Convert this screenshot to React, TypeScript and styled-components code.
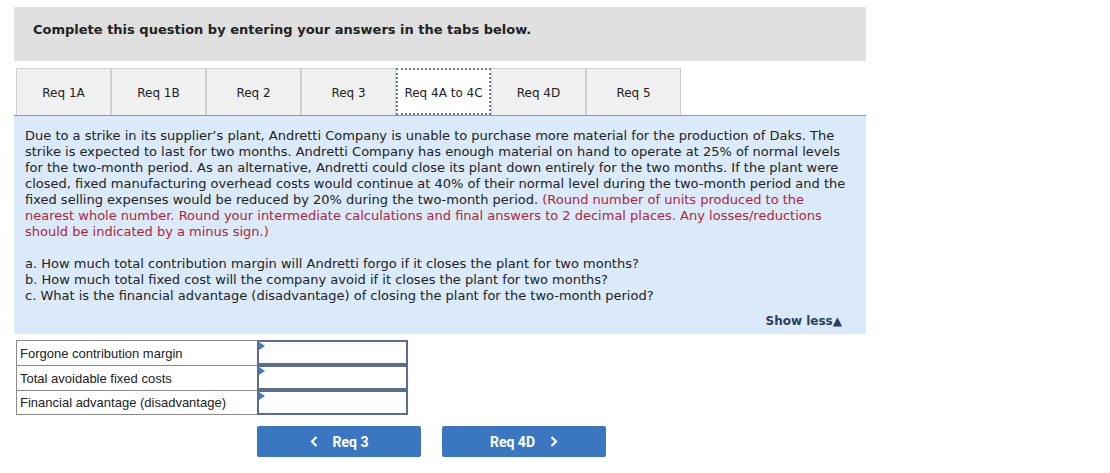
import React from "react";
import styled, { createGlobalStyle } from "styled-components";

const Global = createGlobalStyle`
  html, body { margin: 0; padding: 0; background: #fff; }
  body { font-family: "DejaVu Sans", Verdana, sans-serif; }
  * { box-sizing: border-box; }
`;

const Page = styled.div`
  padding: 7px 0 0 14px;
  width: 1110px;
`;

const Header = styled.div`
  width: 852px;
  height: 54px;
  background: #e0e0e0;
  display: flex;
  align-items: center;
  padding: 0 0 10px 19px;
  font-size: 13px;
  font-weight: bold;
  color: #222;
`;

const Tabs = styled.div`
  display: flex;
  margin-top: 7px;
  padding-left: 2px;
  width: 852px;
  border-bottom: 1px solid #999;
`;

const Tab = styled.div<{ $active?: boolean }>`
  width: 95px;
  height: 47px;
  display: flex;
  align-items: center;
  justify-content: center;
  padding-top: 2px;
  font-size: 12px;
  color: #222;
  background: ${(p) => (p.$active ? "#fff" : "#f0f0f0")};
  border: ${(p) => (p.$active ? "2px dotted #6a7a90" : "1px solid #cfcfcf")};
  border-bottom: ${(p) => (p.$active ? "2px dotted #6a7a90" : "none")};
  margin-bottom: ${(p) => (p.$active ? "-1px" : "0")};
  position: relative;
  z-index: ${(p) => (p.$active ? 1 : 0)};
`;

const Panel = styled.div`
  width: 852px;
  background: #dbeaf8;
  padding: 12px 10px 5px 11px;
  font-size: 13px;
  line-height: 16px;
  color: #222;
`;

const Para = styled.p`
  margin: 0 0 16px 0;
`;

const Red = styled.span`
  color: #b0243a;
`;

const Questions = styled.div`
  margin-bottom: 9px;
`;

const ShowLess = styled.div`
  text-align: right;
  font-size: 12px;
  font-weight: bold;
  color: #2a3f5f;
  padding-right: 14px;
`;

const Table = styled.div`
  margin-top: 6px;
  margin-left: 2px;
  display: grid;
  grid-template-columns: 241px 151px;
  width: 392px;
`;

const Label = styled.div<{ $last?: boolean }>`
  height: 25px;
  border: 1px solid #8a8a8a;
  border-right: none;
  border-bottom: ${(p) => (p.$last ? "1px solid #8a8a8a" : "none")};
  font-family: "Liberation Sans", Arial, sans-serif;
  font-size: 13px;
  color: #222;
  display: flex;
  align-items: center;
  padding-left: 3px;
`;

const InputCell = styled.div`
  height: 25px;
  position: relative;
  border: 2px solid #5b6f8c;
  background: #fff;
  &::before {
    content: "";
    position: absolute;
    left: 0;
    top: 0;
    width: 0;
    height: 0;
    border-top: 4px solid transparent;
    border-bottom: 4px solid transparent;
    border-left: 6px solid #3b7bc8;
  }
`;

const Nav = styled.div`
  display: flex;
  gap: 21px;
  margin-top: 11px;
  margin-left: 243px;
`;

const NavButton = styled.button`
  width: 164px;
  height: 31px;
  background: #3b76c1;
  border: none;
  border-radius: 2px;
  color: #fff;
  font-family: Roboto, "Liberation Sans", Arial, sans-serif;
  font-weight: bold;
  font-size: 14px;
  display: flex;
  align-items: center;
  justify-content: center;
  gap: 15px;
  padding: 0;
`;

const Chevron = ({ dir }: { dir: "left" | "right" }) => (
  <svg width="8" height="11" viewBox="0 0 8 11">
    <path
      d={dir === "left" ? "M6.5 1 L2 5.5 L6.5 10" : "M1.5 1 L6 5.5 L1.5 10"}
      stroke="#fff"
      strokeWidth="2.2"
      fill="none"
    />
  </svg>
);

const tabs = ["Req 1A", "Req 1B", "Req 2", "Req 3", "Req 4A to 4C", "Req 4D", "Req 5"];

export default function App() {
  return (
    <Page>
      <Global />
      <Header>Complete this question by entering your answers in the tabs below.</Header>
      <Tabs>
        {tabs.map((t) => (
          <Tab key={t} $active={t === "Req 4A to 4C"}>
            {t}
          </Tab>
        ))}
      </Tabs>
      <Panel>
        <Para>
          Due to a strike in its supplier’s plant, Andretti Company is unable to purchase more
          material for the production of Daks. The strike is expected to last for two months.
          Andretti Company has enough material on hand to operate at 25% of normal levels for the
          two-month period. As an alternative, Andretti could close its plant down entirely for the
          two months. If the plant were closed, fixed manufacturing overhead costs would continue at
          40% of their normal level during the two-month period and the fixed selling expenses would
          be reduced by 20% during the two-month period.{" "}
          <Red>
            (Round number of units produced to the nearest whole number. Round your intermediate
            calculations and final answers to 2 decimal places. Any losses/reductions should be
            indicated by a minus sign.)
          </Red>
        </Para>
        <Questions>
          a. How much total contribution margin will Andretti forgo if it closes the plant for two
          months?
          <br />
          b. How much total fixed cost will the company avoid if it closes the plant for two months?
          <br />
          c. What is the financial advantage (disadvantage) of closing the plant for the two-month
          period?
        </Questions>
        <ShowLess>Show less▲</ShowLess>
      </Panel>
      <Table>
        <Label>Forgone contribution margin</Label>
        <InputCell />
        <Label>Total avoidable fixed costs</Label>
        <InputCell />
        <Label $last>Financial advantage (disadvantage)</Label>
        <InputCell />
      </Table>
      <Nav>
        <NavButton>
          <Chevron dir="left" />
          Req 3
        </NavButton>
        <NavButton>
          Req 4D
          <Chevron dir="right" />
        </NavButton>
      </Nav>
    </Page>
  );
}
